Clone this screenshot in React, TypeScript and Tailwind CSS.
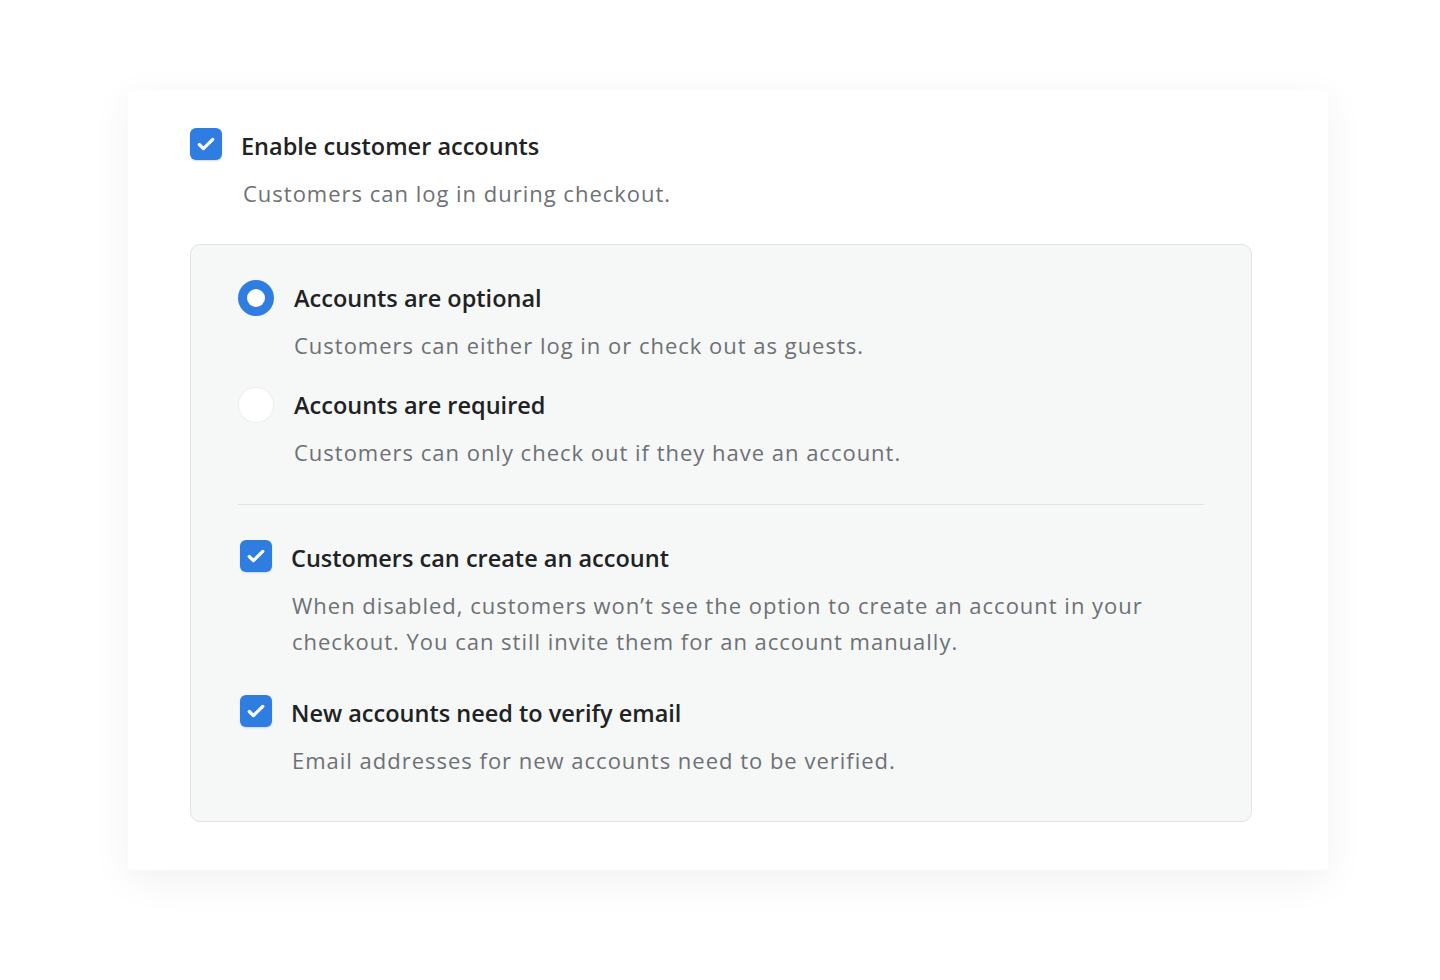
import React from "react";

const font = { fontFamily: "'Open Sans', 'Noto Sans', sans-serif" };

function Check() {
  return (
    <div className="flex h-[32px] w-[32px] shrink-0 items-center justify-center rounded-[6px] bg-[#2f7de1] shadow-[0_1px_2px_rgba(0,0,0,0.15)]">
      <svg width="26" height="26" viewBox="0 0 20 20" fill="none">
        <path d="M4.8 10.4l3.2 3.1 7.2-7" stroke="white" strokeWidth="2.5" strokeLinecap="round" strokeLinejoin="round" />
      </svg>
    </div>
  );
}

function Radio({ on }: { on: boolean }) {
  return on ? (
    <div className="flex h-[36px] w-[36px] shrink-0 items-center justify-center rounded-full bg-[#2f7de1]">
      <div className="h-[18px] w-[18px] rounded-full bg-white" />
    </div>
  ) : (
    <div className="h-[36px] w-[36px] shrink-0 rounded-full border border-[#eceeef] bg-white" />
  );
}

const title = "text-[23.5px] leading-[36px] font-semibold text-[#202223]";
const desc = "text-[22px] leading-[36px] tracking-[0.045em] text-[#6d7175]";

export default function App() {
  return (
    <div className="min-h-[980px] w-full bg-white" style={font}>
      <div className="pl-[128px] pt-[90px]">
        <div className="h-[780px] w-[1200px] rounded-[4px] bg-white pl-[62px] pt-[38px] shadow-[0_10px_40px_rgba(0,0,0,0.06)]">
          <div className="flex items-center gap-[19px]">
            <div className="-mt-[4px]"><Check /></div>
            <div className={title}>Enable customer accounts</div>
          </div>
          <div className={"ml-[53px] mt-[11px] " + desc}>Customers can log in during checkout.</div>

          <div className="mt-[33px] w-[1062px] rounded-[10px] border border-[#e1e3e5] bg-[#f6f7f7] px-[47px] pt-[35px] pb-[43px]">
            <div className="flex items-center gap-[20px]">
              <Radio on />
              <div className={title}>Accounts are optional</div>
            </div>
            <div className={"ml-[56px] mt-[11px] " + desc}>Customers can either log in or check out as guests.</div>

            <div className="mt-[24px] flex items-center gap-[20px]">
              <Radio on={false} />
              <div className={title}>Accounts are required</div>
            </div>
            <div className={"ml-[56px] mt-[11px] " + desc}>Customers can only check out if they have an account.</div>

            <div className="mt-[34px] h-px bg-[#e1e3e5]" />

            <div className="mt-[35px] flex items-center gap-[19px] pl-[2px]">
              <div className="-mt-[4px]"><Check /></div>
              <div className={title}>Customers can create an account</div>
            </div>
            <div className={"ml-[54px] mt-[11px] max-w-[890px] " + desc}>
              When disabled, customers won’t see the option to create an account in your checkout. You can still invite them for an account manually.
            </div>

            <div className="mt-[36px] flex items-center gap-[19px] pl-[2px]">
              <div className="-mt-[4px]"><Check /></div>
              <div className={title}>New accounts need to verify email</div>
            </div>
            <div className={"ml-[54px] mt-[11px] " + desc}>Email addresses for new accounts need to be verified.</div>
          </div>
        </div>
      </div>
    </div>
  );
}
